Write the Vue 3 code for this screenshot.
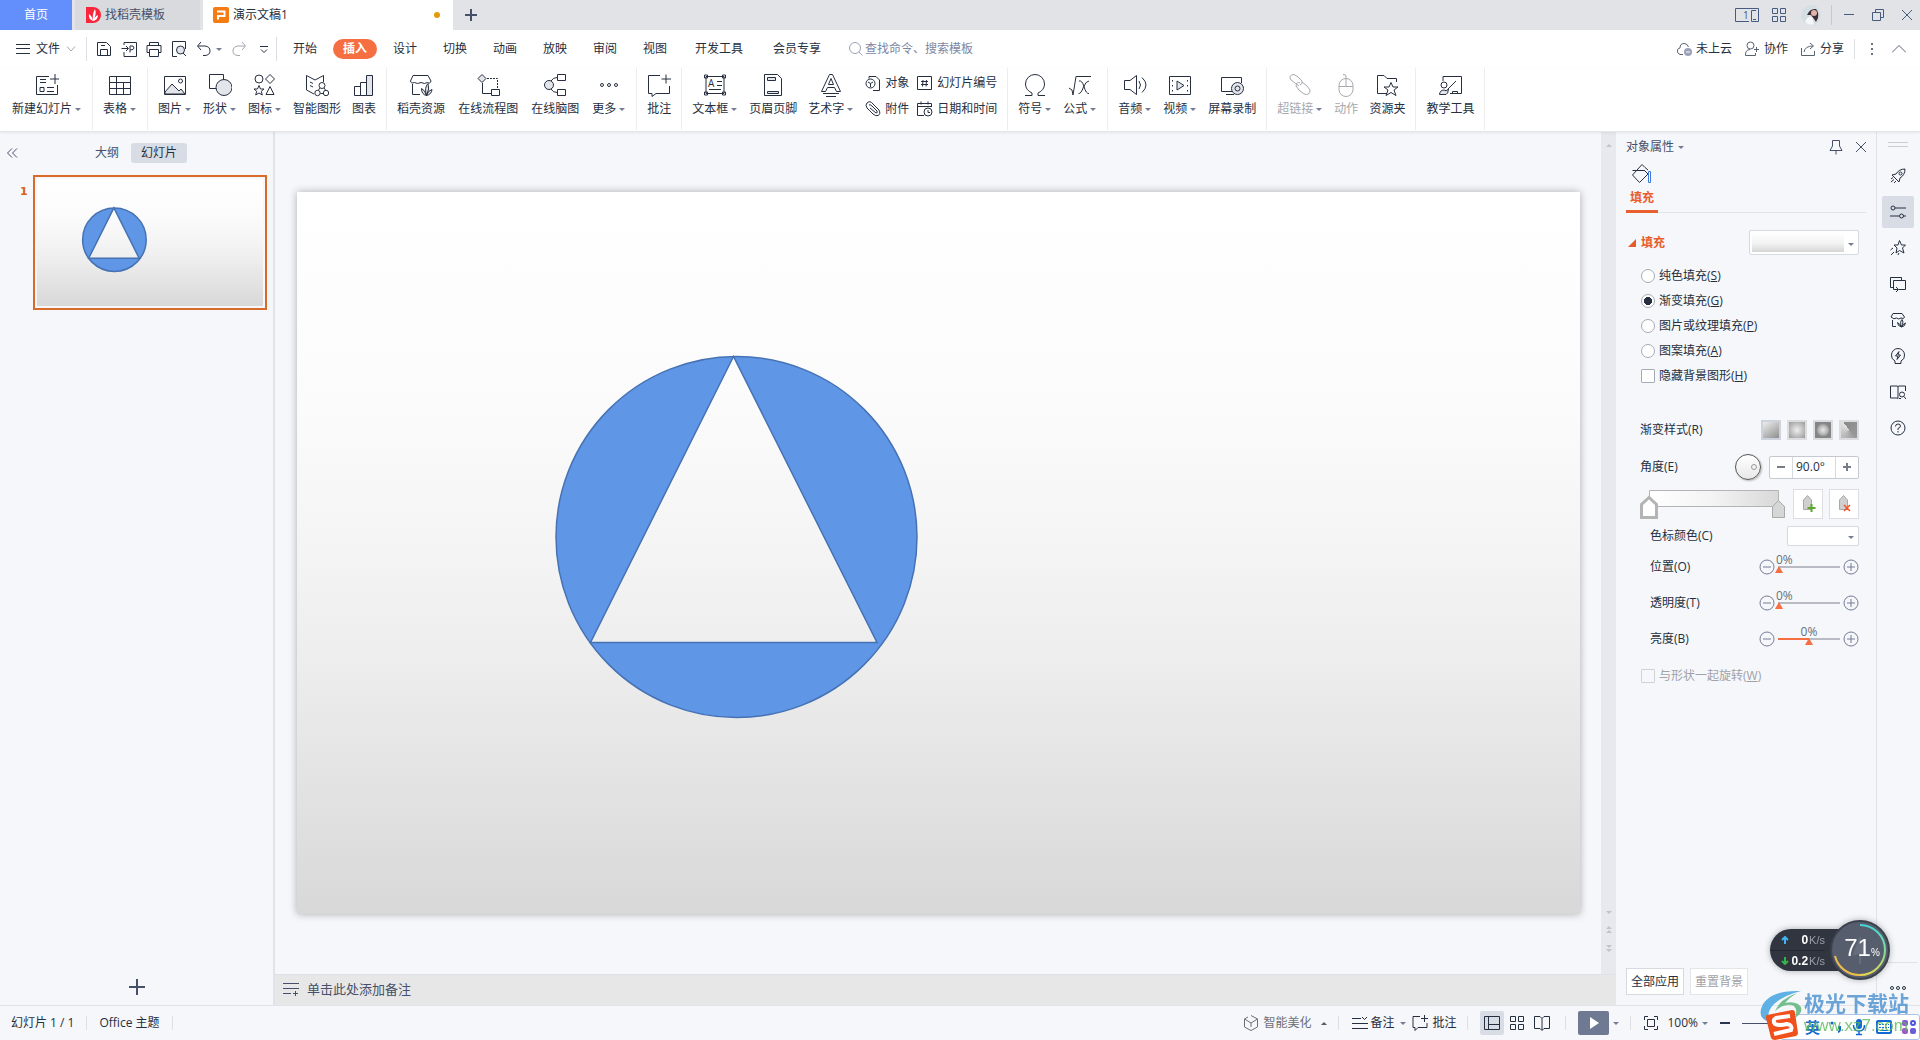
<script setup>
import { ref } from 'vue'

const G = '#e3e5ea'

const icons = {
  newSlide: `<path d="M14 3.5H1.500V21.500H22.500V12M5 9.500H11M5 14.500H9V18.500H5zM12 14.500H19M12 18.500H19M5 6.500H11M20 1V11M15 6H24"/>`,
  table: `<path d="M1.500 3.500H22.500V21.500H1.500zM1.500 9.500H22.500M1.500 15.500H22.500M8.500 3.500V21.500M15.500 9.500V21.500"/>`,
  picture: `<path fill="${G}" d="M2 19L9 11L16 18L18 16L22 21H2z"/><path d="M1.500 3.500H22.500V21.500H1.500z"/><circle cx="17.500" cy="8" r="2"/>`,
  shapes: `<path d="M1.500 1.500H15.500V15.500H1.500z"/><circle cx="16" cy="14.500" r="8" fill="${G}"/>`,
  iconset: `<circle cx="6" cy="6" r="4"/><path d="M17 1.500L21.500 6L17 10.500L12.500 6zM6 12.500L7.500 16H11L8.300 18.300L9.300 22L6 20L2.700 22L3.700 18.300L1 16H4.500zM17 13.500L21 21.500H13z"/>`,
  smart: `<path d="M1.500 2.500L10 7L18.500 2.500V9M1.500 2.500V17L9 21M5 9L8 10.500M5 12.500L8 14"/><circle cx="17" cy="12.500" r="3"/><circle cx="12.500" cy="20" r="2.700"/><circle cx="21" cy="20" r="2.700"/><path d="M15 15L13.500 17M19 15L20.500 17M15.500 20.500H18"/>`,
  chart: `<path d="M2.500 13.500H8.500V22.500H2.500zM8.500 9.500H14.500V22.500H8.500z"/><path fill="${G}" d="M14.500 2.500H20.500V22.500H14.500z"/>`,
  shop: `<path d="M4 2.500H19L22 8Q21.500 11 18.500 9.500Q15.500 11.500 12 9.500Q8.500 11.500 5.500 9.500Q2 11 1.500 8zM3.500 11V21.500H11"/><path fill="${G}" d="M17.500 22.500Q12.500 21.500 12.500 15.500Q16 17 17.500 22.500Q15 14.500 19 10.500Q21 15.500 17.500 22.500Q19.500 17 23 16.500Q22.500 21.500 17.500 22.500"/>`,
  flow: `<path fill="${G}" d="M6 1.500L10 5.500L6 9.500L2 5.500z"/><path stroke-dasharray="2 1" d="M11 5.500H21.500V15"/><path d="M6.500 10V20.500H15M15.500 16.500H23.500V22.500H15.500z"/>`,
  mind: `<circle cx="6" cy="12" r="4.500" fill="${G}"/><path d="M8 8Q10 4.500 14 4.500M8 16Q10 19.500 14 19.500M14.500 1.500H22.500V7.500H14.500zM14.500 16.500H22.500V22.500H14.500z"/>`,
  more: `<circle cx="5" cy="12" r="1.500"/><circle cx="12" cy="12" r="1.500"/><circle cx="19" cy="12" r="1.500"/>`,
  comment: `<path d="M13 2.500H1.500V20.500H5V23.500L9 20.500H22.500V13M19 1.500V10.500M14.500 6H24"/>`,
  textbox: `<path d="M3 3.500H21V20.500H3zM1.500 2H4.500V5H1.500zM19.500 2H22.500V5H19.500zM1.500 19H4.500V22H1.500zM19.500 19H22.500V22H19.500zM14 8.500H19M14 12.500H19M6 16.500H18"/><text x="5" y="14" font-size="10" stroke="none" fill="currentColor">A</text>`,
  header: `<path d="M3.500 1.500H16.500L20.500 5.500V22.500H3.500z"/><path fill="${G}" d="M6.500 4.500H14.500V7.500H6.500zM6.500 18.500H17.500V20.500H6.500z"/>`,
  wordart: `<path d="M2.500 18.500L10.500 1.500H13.500L21.500 18.500H17.500L15.500 14.500H8.500L6.500 18.500zM12 5.500L14.500 11.500H9.500zM4 20.500H20M7 23.500H17"/>`,
  omega: `<path d="M2 22.500H9V20Q2.500 17 2.500 11A9.500 9.500 0 0 1 21.500 11Q21.500 17 15 20V22.500H22"/>`,
  formula: `<path d="M1 15L4 17L5 22L8 3.500H23M11 8Q14 7 16 13.500Q18 21 21 20.500M21 8Q18 8 15.500 14Q13 21 10.500 20.500"/>`,
  audio: `<path d="M1.500 7.500H7L13.500 2.500V21.500L7 16.500H1.500zM16 8Q19 12 16 16M19 4.500Q27 12 19 19.500"/>`,
  video: `<path d="M1.500 3.500H22.500V21.500H1.500zM4.500 7V8.500M4.500 12V13.500M4.500 17V18.500M19.500 7V8.500M19.500 12V13.500M19.500 17V18.500"/><path fill="${G}" d="M9 8L16 12.500L9 17z"/>`,
  record: `<path d="M12 18.500H1.500V4.500H21.500V10M6 21.500H14"/><circle cx="17.500" cy="15.500" r="6" fill="${G}"/><circle cx="17.500" cy="15.500" r="2.500"/>`,
  link: `<path d="M11 13L3 7Q0 2 6 1.500Q10 3 14 8Q15 11 12 12M12 10Q9 8 8 13Q10 17 16 21Q22 23 22 17Q20 13 14 9"/>`,
  mouse: `<rect x="5" y="5.500" width="14" height="18" rx="7"/><path d="M5 13.500H19M12 13V3Q12 1.500 9 1.500"/>`,
  folder: `<path d="M12 20.500H2.500V2.500H9L12 5.500H21.500V9M16 9.500L18 14H23L19 17L21 22.500L16 19.500L11 22.500L13 17L9 14H14z"/>`,
  teach: `<path d="M5 8V3.500H23.500V20.500H12M10 16L18 8M14.500 21V18.500H19.500V21"/><circle cx="6" cy="12" r="3"/><path fill="${G}" d="M1.500 21.500Q2 17 6 17Q8 19 10.500 16Q10 21 8 21.500z"/>`,
  object: `<path d="M4 3.500V1.500H11L14.500 5V15.500H8"/><circle cx="5.500" cy="8.500" r="4.500"/><path d="M3 7L5.500 8.500L8 7M5.500 8.500V12"/>`,
  number: `<path d="M.5 1.500H14.500V14.500H.5zM6 5L5.500 11.500M9.500 5L9 11.500M4 6.500H11M4 9.500H11"/>`,
  clip: `<path d="M2 2Q5-1 8 3L14 9Q16 13 13 14.500Q11 15.500 8 13L2 7Q0 4 2 2M4 4Q5 3 7 5L12 10Q13 12 11 12L5 7"/>`,
  date: `<path d="M7 14.500H.5V2.500H14.500V6M.5 5.500H14.500M4 .500V3.500M11 .500V3.500"/><circle cx="11" cy="11" r="4"/><path d="M11 9V11.500H13"/>`,
  save: `<path d="M1.500 1.500H10.500L14.500 5.500V14.500H1.500zM4.500 14V8.500H11.500V14M5 4.500H9"/>`,
  exportPdf: `<path d="M3 4V1.500H15.500V15.500H3V11M.5 7.500H7M5 5L7.500 7.500L5 10M9 11.500V5Q13 4 13 7Q13 9 9 9"/>`,
  print: `<path d="M3.500 4V1.500H12.500V4M3.500 11.500H1V4.500H15V11.500H12.500M3.500 8.500H12.500V15.500H3.500z"/>`,
  preview: `<path d="M6 15.500H1.500V.500H14.500V8"/><circle cx="9.500" cy="9" r="4" fill="${G}"/><path d="M12 12L15 15"/>`,
  undo: `<path d="M5 1L1.500 5L5 9M2 5H9Q14 5.500 14 10Q14 14 9 14.500H7"/>`,
  redo: `<path d="M11 1L14.500 5L11 9M14 5H7Q2 5.500 2 10Q2 14 7 14.500H9"/>`,
  cloud: `<path d="M7 13.500H4Q.5 12 1.500 9Q2 7 4 7Q4 2.500 8 2.500Q11.500 2.500 12.500 6"/><circle cx="12" cy="11" r="4" fill="#9aa1b8" stroke="none"/><path stroke="#fff" d="M10 11H14"/>`,
  coop: `<circle cx="6.500" cy="4.500" r="3.500"/><path d="M6 8.500Q1 9 1.500 14.500H11.500V12M12.500 6V11M10 8.500H15"/>`,
  share: `<path d="M1.500 7V14.500H14.500V10M4 11Q5 5 13 5M10 2L13.500 5L10 8"/>`,
  rocket: `<path d="M15 1Q9 1 6 6L2 7L4 9L7 12L9 14L10 10Q15 7 15 1zM1 11L3 9.500M1 14L4 11.500M4 15L6 13"/><circle cx="10.500" cy="5.500" r="1.500"/>`,
  sliders: `<circle cx="3" cy="4" r="2"/><path d="M5 4H16M0 12H9M13 12H16"/><circle cx="11.500" cy="12" r="2"/>`,
  star: `<path d="M9.500 .500L11.500 5H15.500L12.500 8L14 13L9.500 10.500L6 13L7 8L4 5H8zM3 8L.5 10M4 12L1 15M9 13L8 15"/>`,
  windows: `<path d="M3 11.500H.5V1.500H11.500V4M9 13.500H15.500V4.500H3.500V13.500H8M6 11L8.500 13.500L6 16"/>`,
  shopSmall: `<path d="M3 1.500H12L14.500 5Q14 7.500 11 6Q8.500 8 6.500 6Q4 8 1 5zM2.500 8V14.500H6"/><path fill="${G}" d="M11.500 15Q7.500 14 7.500 10.500Q10 12 11.500 15Q9.500 10 12 7.500Q14 10 11.500 15Q13 12 15.500 11Q15 14.500 11.500 15"/>`,
  bulb: `<path d="M5 13Q1 11 1.500 7A6.500 6.500 0 0 1 14.500 7Q15 11 11 13V15.500H5z"/><path d="M9 3.500L5.500 8H8L7 11.500L10.500 7H8z"/>`,
  book: `<path d="M8 2.500L7 2H.5V14H7L8 14.500V2.500L9 2H15.500V7M9 14.500H11"/><circle cx="12" cy="10.500" r="2.500"/><path d="M14 12.500L16 15"/>`,
  help: `<circle cx="8" cy="8" r="7"/><path d="M5.500 6.500Q5.500 4 8 4Q10.500 4 10.500 6Q10.500 7.500 8 8.500V10M8 11V12.500"/>`,
  pin: `<path d="M4.500 1.500H11.500V7L14 11.500H2L4.500 7zM8 11.500V15.500"/>`,
  close: `<path d="M3 3L13 13M13 3L3 13"/>`,
  cube: `<path d="M8 .500L14.500 4V12L8 15.500L1.500 12V4M5 2L1.500 4L8 8L14.500 4M8 8V12"/>`,
  notes: `<path d="M0 3.500H9M0 8.500H16M0 13.500H16M10 2L12.500 4.500L15 2"/>`,
  commentSmall: `<path d="M8 1.500H1V12.500H3V15.500L6 12.500H15V8M12.500 0V7M9 3.500H16"/>`,
  normal: `<path d="M.500 1.500H15.500V14.500H.500zM4.500 1.500V14.500M4.500 9.500H15.500"/>`,
  grid: `<path d="M1.500 1.500H6.500V6.500H1.500zM9.500 1.500H14.500V6.500H9.500zM1.500 9.500H6.500V14.500H1.500zM9.500 9.500H14.500V14.500H9.500z"/>`,
  read: `<path d="M8 3.500L6 1.500H.500V13.500H6L8 15.500L10 13.500H15.500V1.500H10L8 3.500V15"/>`,
  fit: `<path d="M1.500 5V1.500H5M11 1.500H14.500V5M14.500 11V14.500H11M5 14.500H1.500V11M4.500 4.500H11.500V11.500H4.500z"/>`,
  addNote: `<path d="M0 2.500H16M0 7.500H16M0 12.500H8M12.500 10V15M10 12.500H15"/>`,
}

const quick = ['save', 'exportPdf', 'print', 'preview']
const menuTabs = ['开始', '插入', '设计', '切换', '动画', '放映', '审阅', '视图', '开发工具', '会员专享']
const account = [
  { icon: 'cloud', label: '未上云' },
  { icon: 'coop', label: '协作' },
  { icon: 'share', label: '分享' },
]

const groups = [
  [{ icon: 'newSlide', label: '新建幻灯片', menu: true }],
  [{ icon: 'table', label: '表格', menu: true }],
  [
    { icon: 'picture', label: '图片', menu: true },
    { icon: 'shapes', label: '形状', menu: true },
    { icon: 'iconset', label: '图标', menu: true },
    { icon: 'smart', label: '智能图形' },
    { icon: 'chart', label: '图表' },
  ],
  [
    { icon: 'shop', label: '稻壳资源' },
    { icon: 'flow', label: '在线流程图' },
    { icon: 'mind', label: '在线脑图' },
    { icon: 'more', label: '更多', menu: true },
  ],
  [{ icon: 'comment', label: '批注' }],
  [
    { icon: 'textbox', label: '文本框', menu: true },
    { icon: 'header', label: '页眉页脚' },
    { icon: 'wordart', label: '艺术字', menu: true },
    { stack: [{ icon: 'object', label: '对象' }, { icon: 'clip', label: '附件' }] },
    { stack: [{ icon: 'number', label: '幻灯片编号' }, { icon: 'date', label: '日期和时间' }] },
  ],
  [
    { icon: 'omega', label: '符号', menu: true },
    { icon: 'formula', label: '公式', menu: true },
  ],
  [
    { icon: 'audio', label: '音频', menu: true },
    { icon: 'video', label: '视频', menu: true },
    { icon: 'record', label: '屏幕录制' },
  ],
  [
    { icon: 'link', label: '超链接', menu: true, off: true },
    { icon: 'mouse', label: '动作', off: true },
    { icon: 'folder', label: '资源夹' },
  ],
  [{ icon: 'teach', label: '教学工具' }],
]

const fill = ref('G')
const fillTypes = [
  { key: 'S', label: '纯色填充' },
  { key: 'G', label: '渐变填充' },
  { key: 'P', label: '图片或纹理填充' },
  { key: 'A', label: '图案填充' },
]
const swatches = ['linear', 'radial', 'square', 'path']
const sliders = [
  { id: 'pos', label: '位置(O)', value: 0 },
  { id: 'alpha', label: '透明度(T)', value: 0 },
  { id: 'light', label: '亮度(B)', value: 50, half: true },
]
const side = ['rocket', 'sliders', 'star', 'windows', 'shopSmall', 'bulb', 'book', 'help']
</script>

<template>
  <div class="app">
    <svg class="defs" aria-hidden="true">
      <linearGradient id="slideFill" gradientUnits="userSpaceOnUse" x1="0" y1="0" x2="0" y2="722">
        <stop offset="0" stop-color="#ffffff" />
        <stop offset=".3" stop-color="#fbfbfb" />
        <stop offset=".5" stop-color="#f4f4f4" />
        <stop offset=".65" stop-color="#ededed" />
        <stop offset="1" stop-color="#d8d8d8" />
      </linearGradient>
      <symbol id="slideArt" viewBox="0 0 1283 722" preserveAspectRatio="none">
        <rect width="1283" height="722" fill="url(#slideFill)" />
        <g class="art" stroke="#4672b4" stroke-miterlimit="10">
          <circle cx="439.500" cy="345" r="180.500" fill="#5f96e6" />
          <path d="M436.500 164.500L293.500 450.500H580z" fill="url(#slideFill)" />
        </g>
      </symbol>
    </svg>

    <header class="titlebar">
      <button class="home">首页</button>
      <button class="doc">
        <svg width="15" height="16" viewBox="0 0 15 16"><path d="M0 0H7A8 8 0 0 1 7 16H0z" fill="#f8263c" /><path d="M7 14Q2 12 3 7Q6 9 7 14Q6 7 9 2Q11 7 7 14Q9 9 12 8Q12 13 7 14" fill="#fff" /></svg>
        找稻壳模板
      </button>
      <button class="doc active">
        <svg width="16" height="16" viewBox="0 0 16 16"><rect width="16" height="16" rx="2" fill="#f57c12" /><path d="M4 4.500H11.500V9H5V12.500" fill="none" stroke="#fff" stroke-width="2" /></svg>
        演示文稿1
        <span class="dirty"></span>
      </button>
      <button class="newtab" aria-label="新建标签"><svg width="12" height="12" viewBox="0 0 12 12"><path d="M6 0V12M0 6H12" stroke="#475069" stroke-width="2" /></svg></button>
      <div class="window">
        <button aria-label="布局"><svg class="ln" width="24" height="14" viewBox="0 0 24 14"><path d="M14 13.500H.500V.500H23.500V13.500H16.500V2.500H21M18 11.500H21" /><text x="8" y="11" font-size="10" stroke="none" fill="currentColor">1</text></svg></button>
        <button class="apps" aria-label="应用"><svg class="ln" width="16" height="16" viewBox="0 0 16 16" v-html="icons.grid"></svg></button>
        <svg class="avatar" width="20" height="20" viewBox="0 0 20 20"><circle cx="10" cy="10" r="10" fill="#d5dee3" /><path d="M6 10Q9 3 15 4Q18 7 17 13L15 17L13 14L10 10z" fill="#3c2c33" /><circle cx="13" cy="8" r="3" fill="#e0b3ab" /><path d="M4 17Q6 11 11 12L13 19Q8 21 4 17" fill="#f3f7f8" /></svg>
        <i class="vline"></i>
        <button class="win" aria-label="最小化"><svg class="ln" width="12" height="12" viewBox="0 0 12 12"><path d="M1 5.500H11" /></svg></button>
        <button class="win" aria-label="还原"><svg class="ln" width="12" height="12" viewBox="0 0 12 12"><path d="M.500 3.500H8.500V11.500H.500zM3.500 3V.500H11.500V8.500H9" /></svg></button>
        <button class="win" aria-label="关闭"><svg class="ln" width="12" height="12" viewBox="0 0 12 12"><path d="M1 1L11 11M11 1L1 11" /></svg></button>
      </div>
    </header>

    <nav class="menubar">
      <button class="file">
        <svg class="ln" width="14" height="12" viewBox="0 0 14 12"><path d="M0 1.500H14M0 5.500H14M0 10.500H14" /></svg>
        文件
        <svg class="ln pale" width="10" height="6" viewBox="0 0 10 6"><path d="M1 .500L5 5L9 .500" /></svg>
      </button>
      <i class="vline"></i>
      <div class="quick">
        <button v-for="q in quick" :key="q" :aria-label="q"><svg class="ln" width="16" height="16" viewBox="0 0 16 16" v-html="icons[q]"></svg></button>
        <button class="undo" aria-label="撤销"><svg class="ln" width="16" height="16" viewBox="0 0 16 16" v-html="icons.undo"></svg><i class="caret"></i></button>
        <button class="pale" aria-label="恢复"><svg class="ln" width="16" height="16" viewBox="0 0 16 16" v-html="icons.redo"></svg></button>
        <button aria-label="更多命令"><svg class="ln" width="16" height="16" viewBox="0 0 16 16"><path d="M4 5.500H12M5 8.500L8 11.500L11 8.500" /></svg></button>
      </div>
      <i class="vline"></i>
      <div class="tabs">
        <button v-for="t in menuTabs" :key="t" class="tab" :class="{ wide: t.length > 2 }"><span :class="{ pill: t === '插入' }">{{ t }}</span></button>
      </div>
      <label class="search">
        <svg class="ln" width="14" height="14" viewBox="0 0 14 14"><circle cx="6" cy="6" r="5.500" /><path d="M10 10L13.500 13.500" /></svg>
        <input type="text" placeholder="查找命令、搜索模板" />
      </label>
      <div class="account">
        <button v-for="a in account" :key="a.label"><svg class="ln" width="16" height="16" viewBox="0 0 16 16" v-html="icons[a.icon]"></svg>{{ a.label }}</button>
        <i class="vline"></i>
        <button aria-label="更多"><svg width="4" height="12" viewBox="0 0 4 12" fill="#69707f"><path d="M1 0h2v2H1zM1 5h2v2H1zM1 10h2v2H1z" /></svg></button>
        <button class="fold" aria-label="折叠功能区"><svg class="ln" width="14" height="8" viewBox="0 0 14 8"><path d="M0 7.500L7 .500L14 7.500" /></svg></button>
      </div>
    </nav>

    <section class="ribbon">
      <div v-for="(g, gi) in groups" :key="gi" class="group" :class="{ loose: g.length === 4 }">
        <template v-for="(it, ii) in g" :key="ii">
          <div v-if="it.stack" class="stack">
            <button v-for="s in it.stack" :key="s.label"><svg class="ln" width="16" height="16" viewBox="0 0 16 16" v-html="icons[s.icon]"></svg>{{ s.label }}</button>
          </div>
          <button v-else class="tool" :disabled="it.off">
            <svg class="ln" width="24" height="24" viewBox="0 0 24 24" v-html="icons[it.icon]"></svg>
            <span>{{ it.label }}<i v-if="it.menu" class="caret"></i></span>
          </button>
        </template>
      </div>
    </section>

    <main class="body">
      <aside class="outline">
        <div class="outhead">
          <button class="collapse" aria-label="收起"><svg class="ln" width="11" height="10" viewBox="0 0 11 10"><path d="M5 .500L.500 5L5 9.500M10 .500L5.500 5L10 9.500" /></svg></button>
          <button class="seg">大纲</button>
          <button class="seg on">幻灯片</button>
        </div>
        <div class="thumbrow">
          <span class="num">1</span>
          <button class="thumb" aria-label="幻灯片 1"><svg viewBox="0 0 1283 722" preserveAspectRatio="none"><use href="#slideArt" width="1283" height="722" /></svg></button>
        </div>
        <button class="addslide" aria-label="新建幻灯片"><svg width="16" height="16" viewBox="0 0 16 16"><path d="M8 0V16M0 8H16" stroke="#475069" stroke-width="2" /></svg></button>
      </aside>

      <section class="editor">
        <div class="stage">
          <div class="canvas">
            <svg class="slide" viewBox="0 0 1283 722"><use href="#slideArt" width="1283" height="722" /></svg>
          </div>
          <div class="scroll">
            <i class="up"></i>
            <div class="jumps">
              <i class="down"></i>
              <span><i class="up"></i><i class="up"></i></span>
              <span><i class="down"></i><i class="down"></i></span>
            </div>
          </div>
        </div>
        <label class="notes">
          <svg class="ln" width="16" height="16" viewBox="0 0 16 16" v-html="icons.addNote"></svg>
          <input type="text" placeholder="单击此处添加备注" />
        </label>
      </section>

      <aside class="panel">
        <div class="phead">
          <button>对象属性<i class="caret"></i></button>
          <button class="pin" aria-label="固定"><svg class="ln" width="16" height="16" viewBox="0 0 16 16" v-html="icons.pin"></svg></button>
          <button aria-label="关闭"><svg class="ln" width="16" height="16" viewBox="0 0 16 16" v-html="icons.close"></svg></button>
        </div>
        <div class="ptabs">
          <button>
            <svg class="ln" width="24" height="24" viewBox="0 0 24 24"><path d="M2.500 8.500H14M12 2.500L2.500 13L9.500 20.500L18 12L14 8M12 2.500L15 5.500L18 8" /><path d="M18.500 9.500H20.500V20.500H18.500z" stroke="#3f7bd6" /></svg>
            填充
          </button>
        </div>
        <div class="fillhead">
          <h3><i class="tri"></i>填充</h3>
          <span class="pick big"><select aria-label="填充预设"><option></option></select><i class="caret"></i></span>
        </div>
        <div class="choices">
          <label v-for="f in fillTypes" :key="f.key"><input v-model="fill" type="radio" name="fill" :value="f.key" /><span>{{ f.label }}(<u>{{ f.key }}</u>)</span></label>
          <label><input type="checkbox" /><span>隐藏背景图形(<u>H</u>)</span></label>
        </div>
        <div class="row styles">
          <span>渐变样式(R)</span>
          <div><button v-for="s in swatches" :key="s" :class="s" :aria-label="s"></button></div>
        </div>
        <div class="row angle">
          <label for="angle">角度(E)</label>
          <button class="dial" aria-label="角度"><i></i></button>
          <div class="stepper"><button aria-label="减小"><svg width="8" height="8" viewBox="0 0 8 8"><path d="M0 4H8" stroke="#777c87" stroke-width="2" /></svg></button><input id="angle" type="text" value="90.0°" /><button aria-label="增大"><svg width="8" height="8" viewBox="0 0 8 8"><path d="M0 4H8M4 0V8" stroke="#777c87" stroke-width="2" /></svg></button></div>
        </div>
        <div class="row stops">
          <svg width="146" height="30" viewBox="0 0 146 30">
            <defs><linearGradient id="ramp"><stop offset="0" stop-color="#fff" /><stop offset=".5" stop-color="#f3f3f3" /><stop offset="1" stop-color="#d8d8d8" /></linearGradient></defs>
            <path d="M9.500 1.500H138.500V17.500H9.500z" fill="url(#ramp)" stroke="#b4b4b4" />
            <path d="M1.500 28.500V15.500L9 8.500L16.500 15.500V28.500z" fill="#fff" stroke="#b4b4b4" stroke-width="3" />
            <path d="M132.500 28.500V17.500L138.500 11.500L144.500 17.500V28.500z" fill="#d6d6d6" stroke="#a9a9a9" />
          </svg>
          <button aria-label="增加渐变光圈"><svg width="16" height="20" viewBox="0 0 16 20"><path d="M3.500 15.500V6L7.500 1.500L11.500 6V15.500z" fill="#cfcfcf" stroke="#a9a9a9" /><path d="M11.500 10V18M7.500 14H15.500" stroke="#5ba82c" stroke-width="2" /></svg></button>
          <button aria-label="删除渐变光圈"><svg width="16" height="20" viewBox="0 0 16 20"><path d="M3.500 15.500V6L7.500 1.500L11.500 6V15.500z" fill="#cfcfcf" stroke="#a9a9a9" /><path d="M8 11L14 17M14 11L8 17" stroke="#f2562e" stroke-width="1.500" /></svg></button>
        </div>
        <div class="row color">
          <label for="stopcolor">色标颜色(C)</label>
          <span class="pick"><select id="stopcolor"><option></option></select><i class="caret"></i></span>
        </div>
        <div v-for="s in sliders" :key="s.id" class="row slide-row">
          <label :for="s.id">{{ s.label }}</label>
          <button aria-label="减小"><svg width="16" height="16" viewBox="0 0 16 16"><circle cx="8" cy="8" r="7" /><path d="M4 8H12" /></svg></button>
          <div class="range" :class="{ half: s.half }"><output :for="s.id">0%</output><input :id="s.id" type="range" min="0" max="100" :value="s.value" /></div>
          <button aria-label="增大"><svg width="16" height="16" viewBox="0 0 16 16"><circle cx="8" cy="8" r="7" /><path d="M4 8H12M8 4V12" /></svg></button>
        </div>
        <div class="choices last">
          <label class="off"><input type="checkbox" disabled /><span>与形状一起旋转(<u>W</u>)</span></label>
        </div>
        <div class="pfoot"><button>全部应用</button><button disabled>重置背景</button></div>
      </aside>

      <aside class="side">
        <i class="grip"></i>
        <button v-for="s in side" :key="s" :class="{ on: s === 'sliders' }" :aria-label="s"><svg class="ln" width="16" height="16" viewBox="0 0 16 16" v-html="icons[s]"></svg></button>
        <div class="sidefoot"><svg class="ln" width="16" height="6" viewBox="0 0 16 6"><circle cx="2" cy="3" r="1.500" /><circle cx="8" cy="3" r="1.500" /><circle cx="14" cy="3" r="1.500" /></svg></div>
      </aside>
    </main>

    <footer class="status">
      <span>幻灯片 1 / 1</span><i class="vline"></i><span>Office 主题</span><i class="vline"></i>
      <div class="right">
        <button class="beauty"><svg class="ln" width="16" height="16" viewBox="0 0 16 16" v-html="icons.cube"></svg>智能美化<i class="caret upward"></i></button>
        <i class="vline"></i>
        <button class="memo"><svg class="ln" width="16" height="16" viewBox="0 0 16 16" v-html="icons.notes"></svg>备注<i class="caret"></i></button>
        <button><svg class="ln" width="16" height="16" viewBox="0 0 16 16" v-html="icons.commentSmall"></svg>批注</button>
        <i class="vline"></i>
        <div class="views">
          <button class="on" aria-label="普通视图"><svg class="ln" width="16" height="16" viewBox="0 0 16 16" v-html="icons.normal"></svg></button>
          <button aria-label="幻灯片浏览"><svg class="ln" width="16" height="16" viewBox="0 0 16 16" v-html="icons.grid"></svg></button>
          <button aria-label="阅读视图"><svg class="ln" width="16" height="16" viewBox="0 0 16 16" v-html="icons.read"></svg></button>
        </div>
        <i class="vline"></i>
        <button class="play" aria-label="放映"><svg width="10" height="12" viewBox="0 0 10 12"><path d="M1 0L10 6L1 12z" fill="#fff" /></svg></button>
        <i class="caret"></i>
        <i class="vline"></i>
        <button class="zoom"><svg class="ln" width="16" height="16" viewBox="0 0 16 16" v-html="icons.fit"></svg>100%<i class="caret"></i></button>
        <svg class="zoomline" width="200" height="4" viewBox="0 0 200 4"><path d="M0 2H10" stroke="#2a3350" stroke-width="2" /><path d="M22 2.500H162" stroke="#475069" /></svg>
      </div>
    </footer>

    <div class="ime">
      <span>英</span>
      <svg width="12" height="14" viewBox="0 0 12 14" fill="#1269d3"><circle cx="2" cy="3" r="1.500" /><path d="M8 6H11V9Q11 12 8 13V11Q9 11 9 9H8z" /></svg>
      <svg width="14" height="18" viewBox="0 0 14 18"><rect x="4" y="1" width="6" height="10" rx="3" fill="#1269d3" /><path d="M1.500 7Q1.500 13 7 13Q12.500 13 12.500 7M7 13V16M4 16.500H10" fill="none" stroke="#1269d3" stroke-width="1.500" /></svg>
      <svg width="16" height="14" viewBox="0 0 16 14"><rect x="1" y="1" width="14" height="12" rx="1" fill="#fff" stroke="#1269d3" stroke-width="2" /><path d="M3 4.500H13M3 7.500H13" stroke="#1269d3" stroke-dasharray="2 1" /><path d="M4 10.500H12" stroke="#1269d3" /></svg>
      <svg width="14" height="14" viewBox="0 0 14 14"><rect width="6" height="6" rx="2" fill="#8a5ad0" /><circle cx="11" cy="3" r="2" fill="none" stroke="#4a55d8" stroke-width="2" /><rect y="8" width="6" height="6" rx="2" fill="#9c5cc6" /><rect x="8" y="8" width="6" height="6" rx="2" fill="#6c5cd6" /></svg>
    </div>

    <div class="mark">
      <svg width="44" height="50" viewBox="0 0 44 50">
        <path d="M41 1Q12 0 3 14Q-4 28 9 32Q6 22 14 14Q24 5 41 1z" fill="#5fb0e4" />
        <path d="M37 3Q20 9 15 21Q26 12 34 16Q38 20 35 28Q46 20 38 14Q32 11 25 13Q30 7 37 3z" fill="#74bd8d" />
        <path d="M7 25L32 20Q35 20 35 23L38 43Q38 45 36 46L15 50Q12 50 11 48L6 28Q5 26 7 25z" fill="#f0501c" />
        <path d="M30 26L16 28Q12 30 15 34Q19 36 27 34Q33 35 31 40L14 44" fill="none" stroke="#fff" stroke-width="4" />
      </svg>
      <div><strong>极光下载站</strong><span>www.xz7.com</span></div>
    </div>

    <div class="speed">
      <div class="rates">
        <p><svg width="8" height="8" viewBox="0 0 8 8"><path d="M4 8V1M1 4L4 1L7 4" fill="none" stroke="#43b4f2" stroke-width="2" /></svg><b>0</b>K/s</p>
        <p><svg width="8" height="8" viewBox="0 0 8 8"><path d="M4 0V7M1 4L4 7L7 4" fill="none" stroke="#35b34a" stroke-width="2" /></svg><b>0.2</b>K/s</p>
      </div>
      <div class="gauge">
        <svg width="60" height="60" viewBox="0 0 60 60">
          <defs><linearGradient id="ring" x1="0" y1="0" x2="0" y2="1"><stop offset="0" stop-color="#45d8d6" /><stop offset=".5" stop-color="#7fdc9c" /><stop offset="1" stop-color="#e5d64e" /></linearGradient></defs>
          <circle cx="30" cy="30" r="29" fill="#565d6d" stroke="#3c414e" stroke-width="2" />
          <path d="M30 16L38 36L31 34V44H29V34L22 36z" fill="#666d7c" />
          <path d="M30 5A25 25 0 0 1 30 55" fill="none" stroke="url(#ring)" stroke-width="2" />
          <path d="M30 55A25 25 0 0 1 5 36" fill="none" stroke="#ecbd4b" stroke-width="2" />
        </svg>
        <span>71<small>%</small></span>
      </div>
    </div>
  </div>
</template>

<style>
body { background: #f5f7fa; overflow: hidden; }
</style>

<style scoped>
.app { display: flex; flex-direction: column; min-height: 100vh; font: 12px/16px "Open Sans", "Noto Sans CJK SC", sans-serif; color: #262f40; background: #f5f7fa; white-space: nowrap; }
.app *, .app *::before { box-sizing: border-box; }
button { display: flex; align-items: center; justify-content: center; margin: 0; padding: 0; border: 0; background: none; font: inherit; color: inherit; flex: none; }
button, select { cursor: pointer; }
input, select { font: inherit; color: inherit; margin: 0; outline: 0; }
svg { display: block; flex: none; }
.defs { position: absolute; width: 0; height: 0; }
.art { stroke-width: 1.500; }
.art > * { vector-effect: non-scaling-stroke; }
.ln { fill: none; stroke: currentColor; stroke-width: 1; }
.pale { color: #a0a5ae; }
.vline { width: 1px; height: 20px; background: #dcdfe4; flex: none; }
.caret { display: inline-block; width: 0; height: 0; border: 3px solid transparent; border-top: 3px solid #747d95; border-bottom: 0; flex: none; }
.caret.upward { border-top: 0; border-bottom: 3px solid #555b66; }

.titlebar { display: flex; height: 30px; background: #e1e3e7; }
.home { width: 72px; margin-right: 3px; background: #638ffc; color: #fff; }
.doc { width: 125px; margin-right: 3px; padding-left: 11px; gap: 4px; justify-content: flex-start; background: #d9dade; color: #475069; }
.doc.active { width: 250px; margin: 0; padding: 0 13px 0 10px; background: #fff; color: #262f40; }
.dirty { width: 6px; height: 6px; margin-left: auto; border-radius: 50%; background: #e59a0c; }
.newtab { width: 36px; }
.window { display: flex; align-items: center; margin-left: auto; color: #475a80; padding-right: 7px; }
.apps { margin: 0 14px 0 12px; }
.window .vline { margin: 0 11px 0 10px; background: #c6c9d0; }
.win + .win { margin-left: 17px; }

.menubar { display: flex; align-items: center; height: 38px; background: #fff; }
.file { width: 86px; padding-left: 6px; gap: 6px; }
.menubar > .vline { height: 24px; }
.quick { display: flex; gap: 9px; padding: 0 8px 0 9px; width: 189px; }
.undo { gap: 4px; }
.tabs { display: flex; margin-left: 3px; }
.tab { width: 50px; }
.tab.wide { width: 78px; }
.pill { width: 44px; height: 20px; line-height: 20px; border-radius: 10px; background: #f66f43; color: #fff; font-weight: 700; }
.search { display: flex; align-items: center; gap: 2px; margin-left: 13px; color: #9ba2b8; }
.search input { width: 140px; padding: 0; border: 0; background: none; }
.search input::placeholder { color: #7c86a3; opacity: 1; }
.account { display: flex; align-items: center; margin-left: auto; gap: 12px; padding-right: 14px; }
.account button { gap: 4px; }
.account .vline { margin: 0 3px 0 -2px; }
.account .fold { margin-left: 6px; }
.account svg { color: #5a6272; }

.ribbon { display: flex; height: 64px; padding-left: 2px; background: #fff; border-bottom: 1px solid #e4e6ea; box-shadow: 0 1px 3px rgba(0, 0, 0, .07); z-index: 1; }
.group { display: flex; gap: 11px; padding: 0 10px; border-right: 1px solid #ededef; height: 62px; }
.loose { gap: 13px; }
.tool { flex-direction: column; justify-content: flex-start; padding-top: 5px; gap: 4px; }
.tool span { display: flex; align-items: center; }
.tool .caret { margin: 0 1px 0 3px; }
.tool:disabled { color: #a6a8ad; }
.stack { display: flex; flex-direction: column; gap: 10px; padding-top: 7px; align-items: flex-start; }
.stack + .stack { margin-left: -3px; }
.stack button { gap: 4px; }

.body { display: flex; flex: 1; }
.outline { display: flex; flex-direction: column; width: 275px; border-right: 2px solid #e1e3eb; padding-bottom: 10px; }
.outhead { display: flex; align-items: center; height: 42px; padding-left: 7px; }
.collapse { margin-right: 66px; color: #475069; }
.seg { height: 20px; padding: 0 11px; border-radius: 3px; color: #475069; }
.seg.on { width: 56px; background: #d8dde5; color: #262f40; margin-left: 1px; }
.thumbrow { display: flex; padding: 1px 6px 0 20px; }
.num { width: 13px; padding-top: 9px; font: bold 11px/16px "DejaVu Sans", sans-serif; color: #d85f12; }
.thumb { flex: 1; padding: 2px; border: 2px solid #d86b2a; aspect-ratio: 26 / 15; }
.thumb svg { width: 100%; height: 100%; }
.addslide { margin: auto auto 0; }

.editor { display: flex; flex-direction: column; flex: 1; min-width: 0; }
.stage { display: flex; flex: 1; }
.canvas { display: flex; flex: 1; align-items: center; padding: 0 21px 0 22px; }
.slide { width: 100%; height: auto; box-shadow: 0 0 8px rgba(0, 0, 0, .3); }
.scroll { display: flex; flex-direction: column; align-items: center; justify-content: space-between; width: 15px; padding: 12px 0 22px; background: #e8e9ef; }
.jumps, .jumps span { display: flex; flex-direction: column; gap: 1px; }
.jumps { gap: 12px; }
.up, .down { border: 3px solid transparent; border-bottom: 3px solid #c0c3cc; border-top: 0; }
.down { border-top: 3px solid #c0c3cc; border-bottom: 0; }
.notes { display: flex; align-items: center; gap: 8px; height: 31px; padding: 0 0 2px 8px; background: #e7e7e7; border-top: 1px solid #dfe1e8; color: #475069; }
.notes input { flex: 1; padding: 0; border: 0; background: none; font-size: 13px; }
.notes input::placeholder { color: #475069; opacity: 1; }

.panel { display: flex; flex-direction: column; width: 261px; border-right: 1px solid #e1e3e8; padding: 0 17px 10px 10px; }
.phead { display: flex; align-items: center; height: 30px; color: #475069; margin-right: -10px; padding: 0; }
.phead .caret { margin-left: 4px; }
.pin { margin: 0 9px 0 auto; }
.ptabs { display: flex; height: 51px; margin-right: -7px; border-bottom: 1px solid #e0e2e6; }
.ptabs button { width: 32px; height: 51px; flex-direction: column; justify-content: flex-start; gap: 4px; color: #e85c2c; font-weight: 700; border-bottom: 3px solid #e8602f; }
.ptabs svg { color: #262f40; }
.fillhead { display: flex; align-items: center; justify-content: space-between; margin-top: 17px; padding-left: 2px; }
h3 { display: flex; align-items: center; gap: 5px; margin: 0; font-size: 12px; color: #e85c2c; }
.tri { border: 4px solid #e85c2c; border-top-color: transparent; border-left-color: transparent; }
.pick { position: relative; display: block; width: 72px; height: 20px; }
.pick select { display: block; width: 100%; height: 100%; appearance: none; border: 1px solid #d6d9df; border-radius: 2px; background: #fff; }
.pick .caret { position: absolute; right: 5px; top: 50%; }
.pick.big { width: 110px; height: 25px; }
.big select { background: linear-gradient(#fff, #f2f2f2 55%, #d6d6d6) 2px center / 92px 19px no-repeat #fff; }
.choices { padding: 8px 0 0 15px; }
.choices label { display: flex; align-items: center; gap: 4px; height: 25px; }
.choices input { appearance: none; width: 14px; height: 14px; border: 1px solid #a6aab5; background: #fff; }
.choices input[type=radio] { border-radius: 50%; }
.choices input[type=checkbox] { border-radius: 1px; }
.choices input[type=radio]:checked { background: radial-gradient(#262f40 0 4px, #fff 4px); }
.choices .off { color: #a0a2a8; }
.choices .off input { border-color: #d0d2d6; background: none; }
.choices.last { padding-top: 6px; }
.row { display: flex; align-items: center; padding-left: 14px; }
.row > label, .row > span:first-child { margin-right: auto; }
.styles { margin-top: 32px; height: 20px; }
.styles div { display: flex; gap: 6px; }
.styles button { width: 20px; height: 20px; border: 2px solid #dcdde0; }
.styles .linear { border-color: #cdd3dc; background: linear-gradient(145deg, #eee, #8e8e8e); }
.styles .radial { background: radial-gradient(#eee, #999); }
.styles .square { background: radial-gradient(#e8e8e8, #b5b5b5 40%, #858585 60%); }
.styles .path { background: conic-gradient(from -35deg, #8b8b8b, #969696 160deg, #ccc 300deg, #e3e3e3); }
.angle { margin-top: 15px; height: 24px; }
.dial { width: 26px; height: 26px; margin-right: 8px; padding-left: 11px; border: 1px solid #555; border-radius: 50%; background: linear-gradient(#fff, #e8e8e8); box-shadow: 1px 1px 2px rgba(0, 0, 0, .25); }
.dial i { width: 6px; height: 6px; border: 1px solid #999; border-radius: 50%; }
.stepper { display: flex; height: 23px; border: 1px solid #c6c9d2; border-radius: 2px; background: #fff; }
.stepper button { width: 22px; }
.stepper input { width: 44px; padding: 0 0 0 3px; border: 1px solid #d6d9df; border-width: 0 1px; background: none; }
.stops { margin-top: 10px; height: 30px; justify-content: space-between; }
.stops button { width: 30px; height: 30px; border: 1px solid #dcdee3; background: #fff; }
.color { margin-top: 7px; height: 20px; padding-left: 24px; }
.slide-row { height: 36px; padding-left: 24px; }
.color + .slide-row { margin-top: 3px; }
.slide-row svg { fill: none; stroke: #747d95; }
.range { display: flex; flex-direction: column; width: 68px; height: 24px; }
.range output { height: 10px; line-height: 10px; padding-left: 1px; color: #6b6f78; }
.range.half output { text-align: center; padding: 0; }
.range input { appearance: none; width: 100%; height: 14px; background: linear-gradient(#b9bbc4, #b9bbc4) center 1px / 62px 2px no-repeat; }
.range.half input { background: linear-gradient(90deg, #f66f43 50%, #b9bbc4 50%) center 1px / 62px 2px no-repeat; }
.range input::-webkit-slider-runnable-track { height: 14px; }
.range input::-webkit-slider-thumb { appearance: none; width: 8px; height: 7px; margin-top: 1px; background: #f66f43; clip-path: polygon(50% 0, 100% 100%, 0 100%); }
.pfoot { display: flex; gap: 6px; margin-top: auto; }
.pfoot button { width: 58px; height: 27px; border: 1px solid #d6d9e0; background: #fff; }
.pfoot button:disabled { color: #a0a2a8; border-color: #e3e5e9; }

.side { display: flex; flex-direction: column; align-items: center; gap: 4px; width: 43px; padding: 10px 2px 0 0; }
.grip { width: 20px; height: 5px; margin-bottom: 9px; border: 1px solid #c9ccd3; border-width: 1px 0; }
.side button { width: 32px; height: 32px; border-radius: 2px; }
.side .on { background: #d8dde5; }
.sidefoot { display: flex; justify-content: center; width: 100%; height: 43px; margin-top: auto; padding-top: 22px; border-top: 1px solid #e0e2e6; }

.status { display: flex; align-items: center; height: 35px; padding-left: 11px; border-top: 1px solid #e1e3e8; }
.status > .vline { height: 14px; margin: 0 12px; }
.right { display: flex; align-items: center; margin-left: auto; }
.right button { gap: 4px; }
.right .vline { height: 14px; margin: 0 12px 0 11px; }
.beauty .caret { margin-left: 6px; }
.beauty { color: #6b6f78; }
.right .memo { gap: 2px; margin: 0 6px 0 1px; }
.memo .caret { margin-left: 4px; }
.views { display: flex; gap: 1px; }
.views button { width: 24px; height: 24px; }
.views .on { background: #d8dde5; border-radius: 2px; }
.play { width: 31px; height: 24px; margin-right: 4px; border-radius: 2px; background: #6f7992; }
.zoom svg { margin-right: 4px; }
.zoomline { margin-left: 12px; }

.ime { position: fixed; right: 0; bottom: 0; display: flex; align-items: center; gap: 10px; width: 140px; height: 26px; padding-left: 24px; border: 1px solid #a9c3e6; border-radius: 3px; background: #fff; }
.ime span { font-size: 15px; font-weight: 700; color: #1269d3; }
.mark { position: fixed; right: 9px; bottom: 0; display: flex; pointer-events: none; }
.mark div { display: flex; flex-direction: column; width: 107px; opacity: .8; }
.mark strong { font-size: 21px; line-height: 26px; font-weight: 700; color: #4a8fd0; }
.mark span { font: 17px/20px "Liberation Sans", sans-serif; color: #58b958; }
.speed { position: fixed; right: 30px; bottom: 60px; display: flex; align-items: center; filter: drop-shadow(0 0 3px rgba(0, 0, 0, .3)); }
.rates { width: 90px; height: 42px; margin-right: -30px; padding-right: 35px; border-radius: 21px 0 0 21px; background: #30353f; color: #9a9fa9; }
.rates p { display: flex; align-items: center; justify-content: flex-end; height: 21px; margin: 0; font: 11px/16px "Liberation Sans", sans-serif; }
.rates p + p { border-top: 1px solid #23272f; }
.rates svg { margin: 0 auto 0 11px; }
.rates b { font-size: 12px; color: #fff; margin-right: 1px; }
.gauge { display: grid; place-items: center; }
.gauge > * { grid-area: 1 / 1; }
.gauge span { padding-left: 4px; font: 24px/28px "Liberation Sans", sans-serif; color: #fff; }
.gauge small { font-size: 10px; }
</style>
